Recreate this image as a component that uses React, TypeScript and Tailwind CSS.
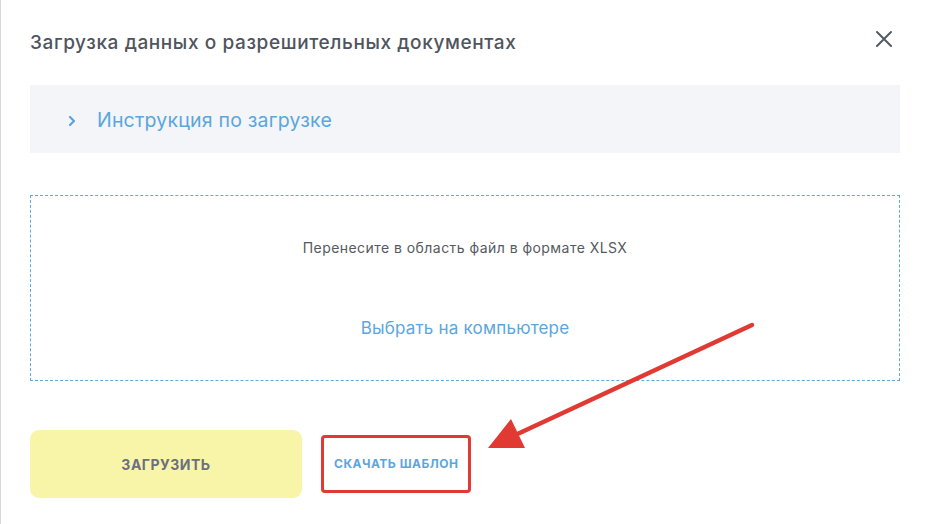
export default function App() {
  return (
    <div
      className="relative w-[928px] h-[524px] bg-white border-l border-[#d4d7dc] overflow-hidden"
      style={{ fontFamily: "Inter, Roboto, 'Noto Sans', sans-serif" }}
    >
      <div className="pl-[29px] pr-[28px] pt-[27px]">
        <div className="flex items-center justify-between h-[32px]">
          <h1 className="text-[19px] font-medium tracking-[0.6px] text-[#4f555d]">
            Загрузка данных о разрешительных документах
          </h1>
          <button className="mr-[7px] -mt-[8px] text-[#555b63]">
            <svg width="18" height="18" viewBox="0 0 18 18" fill="none" stroke="currentColor" strokeWidth="2" strokeLinecap="round">
              <path d="M2 2L16 16M16 2L2 16" />
            </svg>
          </button>
        </div>

        <div className="mt-[26px] h-[68px] bg-[#f3f5f8] flex items-center pl-[38px] pt-[3px]">
          <svg width="8" height="12" viewBox="0 0 8 12" fill="none" stroke="#5aa3dc" strokeWidth="2.2" strokeLinecap="round" strokeLinejoin="round">
            <path d="M2 2L6 6L2 10" />
          </svg>
          <span className="ml-[21px] text-[19.5px] tracking-[0.2px] text-[#5ba6de]">Инструкция по загрузке</span>
        </div>

        <div className="mt-[42px] h-[186px] border border-dashed border-[#5fa8e0] flex flex-col items-center pt-[42px]">
          <p className="text-[14px] leading-[20px] tracking-[0.45px] text-[#555a60]">Перенесите в область файл в формате XLSX</p>
          <button className="mt-[58px] text-[17px] leading-[24px] tracking-[0.2px] text-[#5ba6de]">Выбрать на компьютере</button>
        </div>

        <div className="mt-[49px] flex items-center gap-[19px]">
          <button className="w-[272px] h-[68px] rounded-[9px] bg-[#f8f5a9] text-[14px] font-bold tracking-[0.5px] text-[#6c6f80] uppercase">
            Загрузить
          </button>
          <button className="h-[58px] px-[10px] border-[3px] border-[#e03a33] rounded-[4px] text-[12px] font-bold tracking-[0.5px] text-[#5ba6de] uppercase">
            Скачать шаблон
          </button>
        </div>
      </div>

      <svg className="absolute left-0 top-0 pointer-events-none" width="928" height="524" viewBox="0 0 928 524">
        <line x1="751" y1="325" x2="510" y2="437" stroke="#e03a33" strokeWidth="4.5" strokeLinecap="round" />
        <polygon points="487,448 510,419 524,448" fill="#e03a33" />
      </svg>
    </div>
  );
}
